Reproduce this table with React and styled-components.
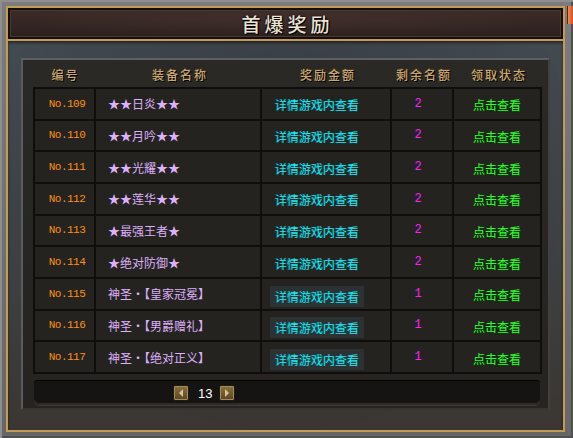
import React from "react";
import styled, { createGlobalStyle } from "styled-components";

const GlobalStyle = createGlobalStyle`
  html, body {
    margin: 0;
    padding: 0;
    background: #6c6c6c;
  }
  body {
    width: 573px;
    height: 438px;
    overflow: hidden;
    font-family: "Noto Sans CJK SC", "Noto Sans", sans-serif;
  }
`;

const COLS = "166px 130px 62px 88px";

const Frame = styled.div`
  position: relative;
  box-sizing: border-box;
  width: 573px;
  height: 438px;
  padding: 6px 8px 6px 6px;
  background: linear-gradient(180deg, #7c7c7c, #666666);
  box-shadow: inset 2px 2px 0 #8e8e8e, inset -2px -2px 0 #505050;
`;

const CloseEdge = styled.span`
  position: absolute;
  top: 6px;
  right: 0;
  width: 5px;
  height: 18px;
  background: linear-gradient(90deg, #f08a50, #d8501e);
  border-left: 1px solid #5a2a14;
`;

const Window = styled.div`
  box-sizing: border-box;
  height: 100%;
  border: 2px solid #c39b58;
  display: flex;
  flex-direction: column;
  background: #2c2a28;
`;

const TitleBar = styled.div`
  box-sizing: border-box;
  height: 33px;
  border: 2px solid #140e0d;
  box-shadow: inset 0 0 0 1px #4a3834;
  background:
    radial-gradient(ellipse at 50% 40%, rgba(90, 64, 58, 0.3), transparent 70%),
    linear-gradient(180deg, #3b2b29, #2c201e);
  display: flex;
  align-items: center;
  justify-content: center;
`;

const Title = styled.h1`
  margin: 0;
  font-size: 19px;
  font-weight: 500;
  letter-spacing: 4px;
  padding-left: 4px;
  color: #ece3d2;
  text-shadow: 1px 1px 0 #000, 0 0 3px #000;
`;

const GoldRule = styled.div`
  height: 2px;
  background: #c39b58;
`;

const Stone = styled.div`
  flex: 1;
  display: flex;
  padding: 17px 13px 20px 13px;
  background:
    radial-gradient(ellipse at 50% 30%, rgba(0, 0, 0, 0.18), transparent 75%),
    linear-gradient(180deg, #434a50 0%, #3d4144 55%, #3b3631 100%);
  box-shadow: inset 0 2px 3px rgba(0, 0, 0, 0.45);
`;

const Panel = styled.div`
  flex: 1;
  box-sizing: border-box;
  display: flex;
  flex-direction: column;
  padding: 0 6px 3px 10px;
  border: 2px solid;
  border-color: #5b6064 #433f3a #38342f #585c60;
  background: linear-gradient(180deg, #2a2926, #262320);
`;

const HeaderRow = styled.div`
  display: grid;
  grid-template-columns: 63px ${COLS};
  height: 27px;
  align-items: center;
  padding-top: 3px;
  box-sizing: border-box;
`;

const HeaderLabel = styled.div`
  text-align: center;
  font-size: 12px;
  font-weight: 500;
  letter-spacing: 2px;
  padding-left: 2px;
  color: #c9a86e;
  text-shadow: 1px 1px 0 #000, 0 -1px 0 #4a3822;
`;

const Table = styled.div`
  display: grid;
  grid-template-columns: 61px ${COLS};
  grid-auto-rows: 31.7px;
  border-top: 2px solid #0f0e0c;
  border-left: 2px solid #0f0e0c;
`;

const Cell = styled.div`
  box-sizing: border-box;
  display: flex;
  align-items: center;
  justify-content: ${(p) => (p.$left ? "flex-start" : "center")};
  padding-left: ${(p) => (p.$left ? "12px" : "0")};
  border-right: 2px solid #0f0e0c;
  border-bottom: 2px solid #0f0e0c;
  background: #25231f;
`;

const Code = styled.span`
  font-family: "Liberation Mono", "DejaVu Sans Mono", monospace;
  font-size: 11px;
  letter-spacing: -0.5px;
  padding-left: 5px;
  color: #ff8f14;
`;

const ItemName = styled.span`
  font-size: 12px;
  color: #dcb0fa;
  white-space: nowrap;
`;

const Reward = styled.span`
  font-size: 12px;
  color: #1fe6ea;
  text-shadow: -1px 0 0 #0b5f74;
  padding: 2px 5px;
  margin-right: 18px;
  margin-top: ${(p) => (p.$boxed ? "5px" : "2px")};
  background: ${(p) => (p.$boxed ? "#2c3134" : "transparent")};
`;

const Remain = styled.span`
  font-family: "Liberation Mono", "DejaVu Sans Mono", monospace;
  font-size: 12px;
  color: #ff1cff;
  margin-right: 8px;
`;

const Action = styled.span`
  font-size: 12px;
  color: #2cff2c;
  text-shadow: 1px 1px 0 #0a3a0a;
  margin-top: 2px;
`;

const Pager = styled.div`
  box-sizing: border-box;
  height: 25px;
  margin: 6px 2px 0 1px;
  padding-left: 139px;
  display: flex;
  align-items: center;
  gap: 5px;
  border-radius: 3px 3px 5px 5px;
  background: #151412;
  border-top: 1px solid #050505;
  box-shadow: inset 0 -2px 0 #2e2b27, 0 1px 0 #403b35;
`;

const PageButton = styled.button`
  width: 16px;
  height: 16px;
  padding: 0;
  display: flex;
  align-items: center;
  justify-content: center;
  border: 1px solid #1e1a12;
  border-radius: 2px;
  background: linear-gradient(180deg, #8a7142, #5a4422);
  box-shadow: inset 0 0 0 1px #a48c5a;
  cursor: pointer;
`;

const PageNumber = styled.span`
  font-family: "Liberation Sans", Arial, sans-serif;
  font-size: 13px;
  color: #ffffff;
  margin: 0 2px 0 4px;
`;

const Arrow = ({ dir }) => (
  <svg width="6" height="8" viewBox="0 0 6 8">
    {dir === "left" ? (
      <polygon points="5,0 5,8 1,4" fill="#d7c291" />
    ) : (
      <polygon points="1,0 1,8 5,4" fill="#d7c291" />
    )}
  </svg>
);

const rows = [
  { no: 109, name: "★★日炎★★", remain: 2 },
  { no: 110, name: "★★月吟★★", remain: 2 },
  { no: 111, name: "★★光耀★★", remain: 2 },
  { no: 112, name: "★★莲华★★", remain: 2 },
  { no: 113, name: "★最强王者★", remain: 2 },
  { no: 114, name: "★绝对防御★", remain: 2 },
  { no: 115, name: "神圣·【皇家冠冕】", remain: 1, boxed: true },
  { no: 116, name: "神圣·【男爵赠礼】", remain: 1, boxed: true },
  { no: 117, name: "神圣·【绝对正义】", remain: 1, boxed: true },
];

const headers = ["编号", "装备名称", "奖励金额", "剩余名额", "领取状态"];

export default function App() {
  return (
    <>
      <GlobalStyle />
      <Frame>
        <CloseEdge />
        <Window>
          <TitleBar>
            <Title>首爆奖励</Title>
          </TitleBar>
          <GoldRule />
          <Stone>
            <Panel>
              <HeaderRow>
                {headers.map((h) => (
                  <HeaderLabel key={h}>{h}</HeaderLabel>
                ))}
              </HeaderRow>
              <Table>
                {rows.map((r) => (
                  <React.Fragment key={r.no}>
                    <Cell>
                      <Code>No.{r.no}</Code>
                    </Cell>
                    <Cell $left>
                      <ItemName>{r.name}</ItemName>
                    </Cell>
                    <Cell>
                      <Reward $boxed={r.boxed}>详情游戏内查看</Reward>
                    </Cell>
                    <Cell>
                      <Remain>{r.remain}</Remain>
                    </Cell>
                    <Cell>
                      <Action>点击查看</Action>
                    </Cell>
                  </React.Fragment>
                ))}
              </Table>
              <Pager>
                <PageButton aria-label="上一页">
                  <Arrow dir="left" />
                </PageButton>
                <PageNumber>13</PageNumber>
                <PageButton aria-label="下一页">
                  <Arrow dir="right" />
                </PageButton>
              </Pager>
            </Panel>
          </Stone>
        </Window>
      </Frame>
    </>
  );
}
